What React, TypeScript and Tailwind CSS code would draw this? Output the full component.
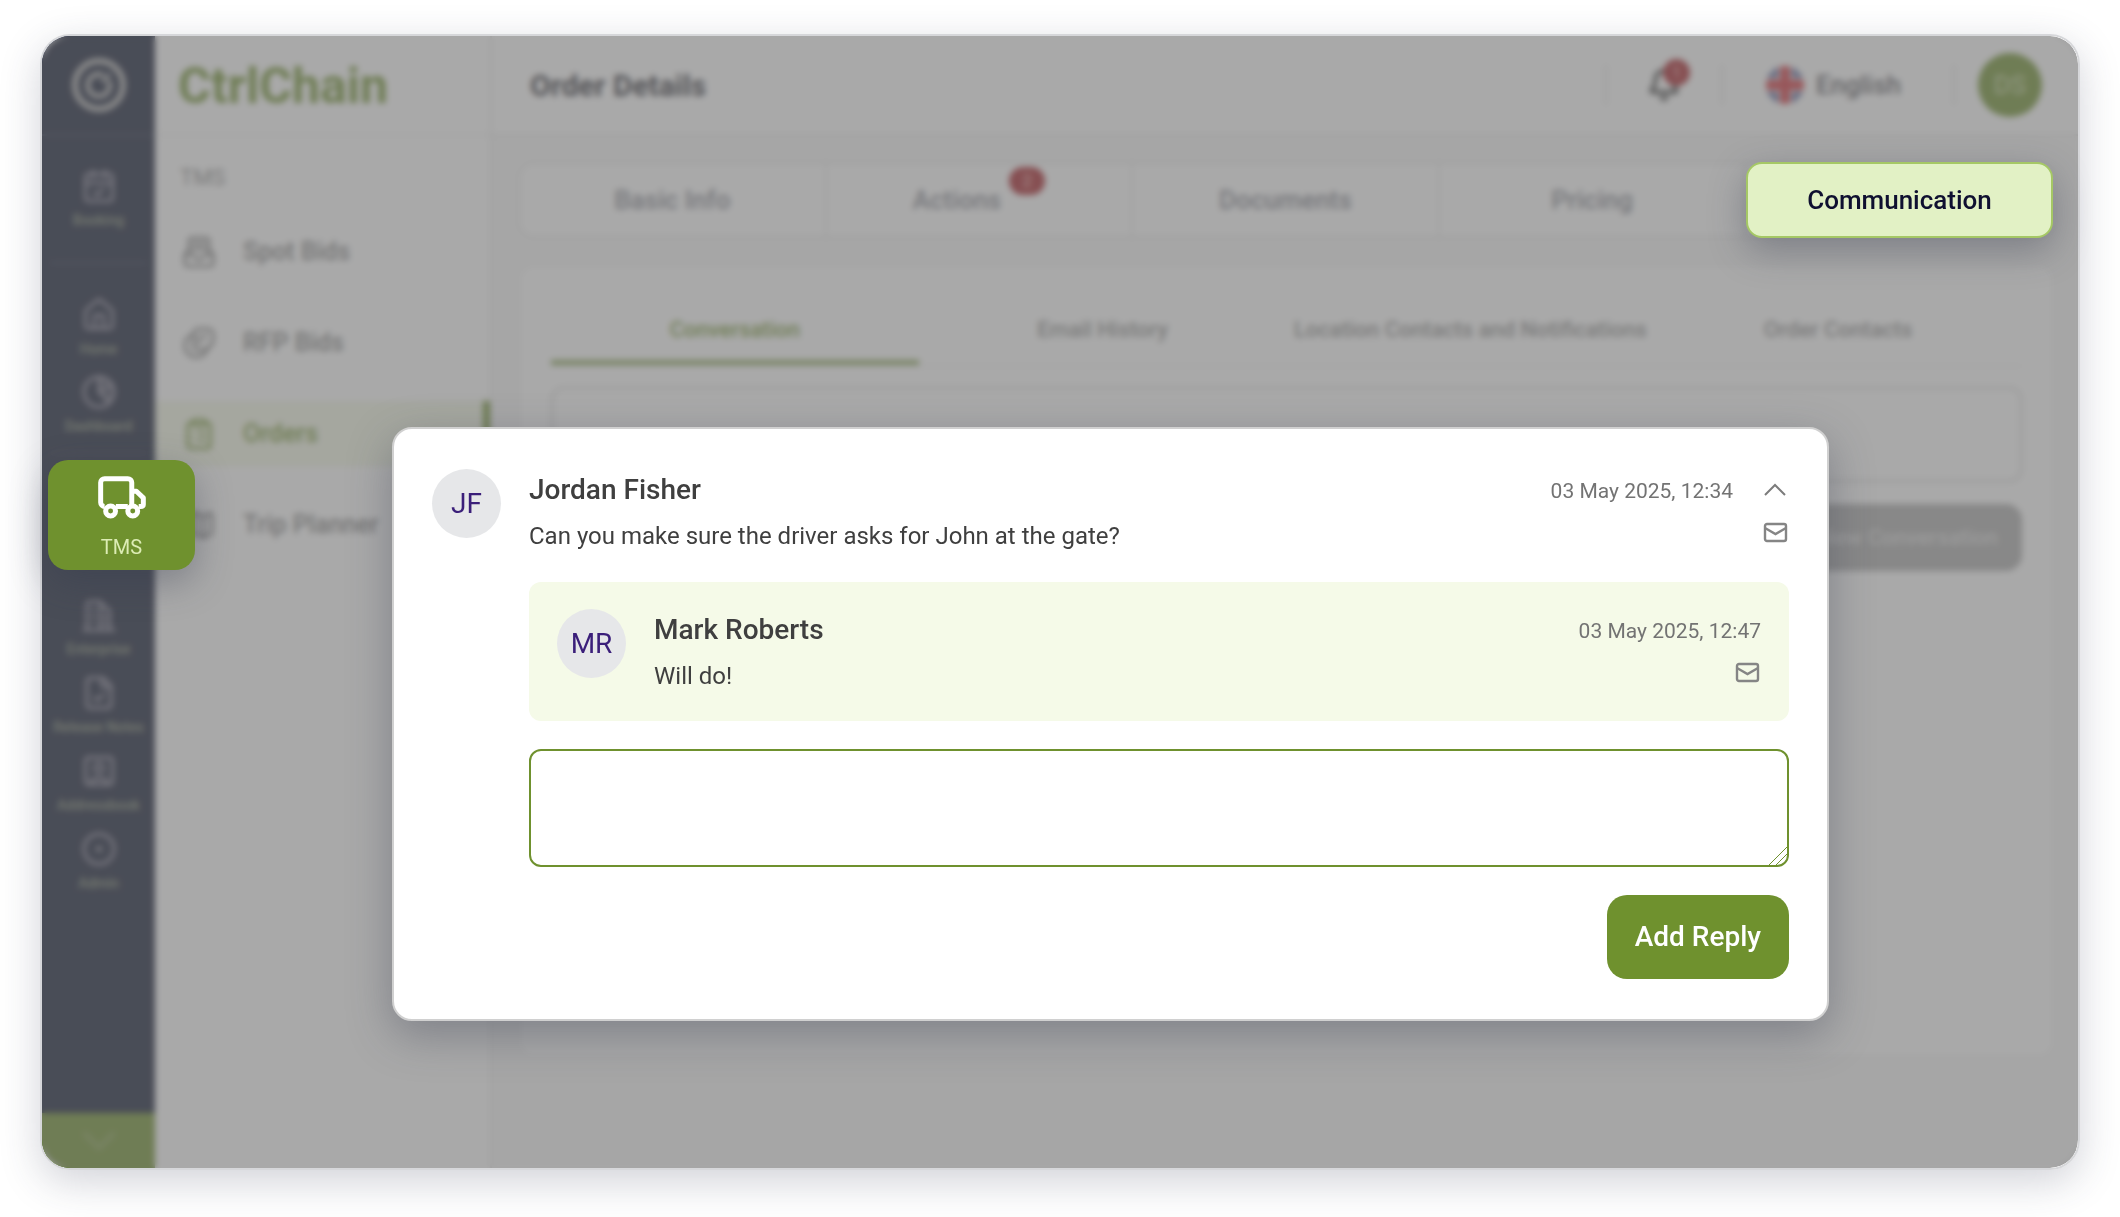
import type { ComponentType, ReactNode, SVGProps } from 'react';
import {
  Bell,
  CalendarCheck,
  ChevronDown,
  ClipboardList,
  CircleDot,
  FileCheck,
  House,
  Map,
  SquareUser,
} from 'lucide-react';
import clsx from 'clsx';

type IconType = ComponentType<SVGProps<SVGSVGElement>>;

function StrokeIcon({ children, ...props }: SVGProps<SVGSVGElement>) {
  return (
    <svg
      viewBox="0 0 24 24"
      fill="none"
      stroke="currentColor"
      strokeWidth="2"
      strokeLinecap="round"
      strokeLinejoin="round"
      {...props}
    >
      {children}
    </svg>
  );
}

function SpotIcon(props: SVGProps<SVGSVGElement>) {
  return (
    <StrokeIcon {...props}>
      <path d="M5 11V4a2 2 0 0 1 2-2h10a2 2 0 0 1 2 2v7M8 6h8M7 10h10M2 14l3-4M22 14l-3-4" />
      <path d="M2 14h6l2 3h4l2-3h6v6a2 2 0 0 1-2 2H4a2 2 0 0 1-2-2z" />
    </StrokeIcon>
  );
}

function RfpIcon(props: SVGProps<SVGSVGElement>) {
  return (
    <StrokeIcon {...props}>
      <path d="M12 2h6a4 4 0 0 1 4 4v3a8 8 0 0 1-8 8h-3a3 3 0 0 1-3-3V6a4 4 0 0 1 4-4z" />
      <path d="M8 6c-4 1-6 4-6 8a8 8 0 0 0 8 8c4 0 7-2 8-7M12 7v6M16 6v3" />
    </StrokeIcon>
  );
}

function PieIcon(props: SVGProps<SVGSVGElement>) {
  return (
    <StrokeIcon {...props}>
      <circle cx="12" cy="12" r="10" />
      <path d="M12 2v10l7 7M12 12l9-4" />
      <path d="M12 2a10 10 0 0 1 9 6l-9 4zM14 13l8-2-3 8z" fill="currentColor" fillOpacity="0.4" stroke="none" />
    </StrokeIcon>
  );
}

function BuildingIcon(props: SVGProps<SVGSVGElement>) {
  return (
    <StrokeIcon {...props}>
      <path d="M4 22V5a2 2 0 0 1 2-2h7v19M13 4l6 5v13M2 22h20M8 8h1M8 12h1M8 16h1M16 12v0M16 15v0M16 18v0" />
    </StrokeIcon>
  );
}

const RAIL_TOP = [
  { label: 'Home', icon: House },
  { label: 'Dashboard', icon: PieIcon },
];

const RAIL_BOTTOM = [
  { label: 'Enterprise', icon: BuildingIcon },
  { label: 'Release Notes', icon: FileCheck },
  { label: 'Addressbook', icon: SquareUser },
  { label: 'Admin', icon: CircleDot },
];

const MENU = [
  { label: 'Spot Bids', icon: SpotIcon },
  { label: 'RFP Bids', icon: RfpIcon },
  { label: 'Orders', icon: ClipboardList, active: true },
  { label: 'Trip Planner', icon: Map },
];

const ORDER_TABS = [
  { label: 'Basic Info' },
  { label: 'Actions', badge: 2 },
  { label: 'Documents' },
  { label: 'Pricing' },
];

const SUB_TABS = ['Conversation', 'Email History', 'Location Contacts and Notifications', 'Order Contacts'];

function RailItem({ label, icon: Icon }: { label: string; icon: IconType }) {
  return (
    <a href="#" className="flex flex-col items-center gap-[6px]">
      <Icon className="size-[36px] text-[#8c899c]" strokeWidth={2} />
      <span className="text-[14px] leading-5 font-medium whitespace-nowrap text-[#818c75]">{label}</span>
    </a>
  );
}

function Rail() {
  return (
    <nav className="flex w-[113px] shrink-0 flex-col bg-[#111932]">
      <div className="flex h-[100px] items-center justify-center border-b-2 border-[#2b334d]">
        <svg viewBox="0 0 56 56" className="size-[56px]" fill="none" stroke="#b4b4b4">
          <circle cx="28" cy="28" r="24" strokeWidth="6" />
          <path d="M32 18a11 11 0 1 0 6 6" strokeWidth="5" />
          <path d="M31 25l8-8" strokeWidth="4" />
        </svg>
      </div>
      <div className="mx-2 border-b-2 border-[#2b334d] py-[32px]">
        <RailItem label="Booking" icon={CalendarCheck} />
      </div>
      <div className="mx-2 flex flex-col gap-[15px] border-b-2 border-[#232b45] pt-[33px] pb-4">
        {RAIL_TOP.map((item) => (
          <RailItem key={item.label} {...item} />
        ))}
      </div>
      {/* The floating TMS tile covers this slot */}
      <div className="h-[143px] shrink-0" />
      <div className="flex flex-col gap-4">
        {RAIL_BOTTOM.map((item) => (
          <RailItem key={item.label} {...item} />
        ))}
      </div>
      <button type="button" aria-label="Collapse" className="mt-auto flex h-[55px] items-center justify-center bg-[#6f912e]">
        <ChevronDown className="size-14 text-[#86a252]" strokeWidth={2} />
      </button>
    </nav>
  );
}

function Menu() {
  return (
    <aside className="flex w-[337px] shrink-0 flex-col border-r-2 border-[#eaeaea] bg-white">
      <div className="flex h-[100px] items-center border-b-2 border-[#f1f1f1] pt-[2px] pl-[23px] text-[50px] font-bold text-[#6f912e]">
        CtrlChain
      </div>
      <h2 className="mt-[30px] pl-[25px] text-[22px] leading-6 text-[#8a8a8a]">TMS</h2>
      <ul className="mt-[29px] flex flex-col gap-[25px]">
        {MENU.map(({ label, icon: Icon, active }) => (
          <li key={label}>
            <a
              href="#"
              className={clsx(
                'flex h-[66px] items-center gap-[27px] pl-[27px] text-[25px] font-medium',
                active
                  ? 'border-r-[7px] border-[#6f912e] bg-[#f5f9e7] text-[#6f912e]'
                  : 'text-[#7d7d7d]',
              )}
            >
              <Icon className="size-[34px]" strokeWidth={2} />
              {label}
            </a>
          </li>
        ))}
      </ul>
    </aside>
  );
}

function UkFlag() {
  return (
    <svg viewBox="0 0 38 38" className="size-[38px] rounded-full">
      <rect width="38" height="38" fill="#f0f0f0" />
      <path d="M5 0h6v11zM0 5v6h11zM33 0h-6v11zM38 5v6H27zM5 38h6V27zM0 33v-6h11zM33 38h-6V27zM38 33v-6H27z" fill="#1f2b7b" stroke="#1f2b7b" />
      <path d="M14 0h10v14h14v10H24v14H14V24H0V14h14z" fill="#d3333c" />
    </svg>
  );
}

function Separator() {
  return <div className="h-10 w-[2px] bg-[#e2e2e2]" />;
}

function TopBar() {
  return (
    <header className="flex h-[100px] items-center border-b-2 border-[#eaeaea] bg-white pr-9 pl-[38px]">
      <h1 className="text-[30px] font-bold text-[#2e2e36]">Order Details</h1>
      <div className="ml-auto flex items-center">
        <Separator />
        <button type="button" aria-label="Notifications" className="relative mx-[39px] p-px">
          <Bell className="size-[34px] text-[#444444]" strokeWidth={3} />
          <span className="absolute -top-2 -right-2 flex size-[27px] items-center justify-center rounded-full bg-[#a81f27] text-[16px] font-bold text-[#d88]">
            1
          </span>
        </button>
        <Separator />
        <button type="button" className="mr-[52px] ml-[43px] flex items-center gap-3 text-[26px] font-medium text-[#55555b]">
          <UkFlag />
          English
        </button>
        <Separator />
        <div className="ml-[23px] flex size-16 items-center justify-center rounded-full bg-[#6f912e] text-[26px] font-medium text-[#b9cd8e]">
          DS
        </div>
      </div>
    </header>
  );
}

function OrderPage() {
  return (
    <div className="flex min-w-0 flex-1 flex-col bg-[#f8f8f8]">
      <TopBar />
      <main className="pt-[26px] pr-[23px] pl-[26px]">
        <div className="grid h-[76px] grid-cols-5 rounded-2xl border-2 border-[#e8e8e8] bg-white">
          {ORDER_TABS.map(({ label, badge }) => (
            <button
              key={label}
              type="button"
              className="flex items-center justify-center border-r-2 border-[#e8e8e8] text-[26px] font-medium text-[#7f828c]"
            >
              <span className={clsx('relative', badge && 'pr-11')}>
                {label}
                {badge && (
                  <span className="absolute -top-[14px] right-0 flex h-7 w-9 items-center justify-center rounded-full bg-[#a81f27] text-[18px] font-bold text-[#d88]">
                    {badge}
                  </span>
                )}
              </span>
            </button>
          ))}
        </div>

        <section className="mt-[26px] h-[794px] rounded-2xl border-2 border-[#f0f0f0] bg-white px-[31px] pt-[33px]">
          <div className="grid grid-cols-4 border-b-2 border-[#f3f3f3]">
            {SUB_TABS.map((label, i) => (
              <button
                key={label}
                type="button"
                className={clsx(
                  'h-[66px] border-b-[5px] text-[22px] font-medium whitespace-nowrap',
                  i === 0 ? 'border-[#84a050] text-[#6f912e]' : 'border-transparent text-[#8a8a8a]',
                )}
              >
                {label}
              </button>
            ))}
          </div>
          <textarea
            aria-label="New conversation"
            className="mt-5 block h-[95px] w-full resize-none rounded-xl border-2 border-[#d4d4d4] bg-white"
          />
          <button
            type="button"
            className="mt-[22px] ml-auto block h-[67px] rounded-2xl bg-[#acacac] px-6 text-[22px] font-medium text-[#dddddd]"
          >
            New Conversation
          </button>
        </section>
      </main>
    </div>
  );
}

function TruckIcon() {
  return (
    <svg viewBox="0 0 145 130" className="h-[43px] w-12" fill="none" stroke="#fff" strokeWidth="15" strokeLinejoin="round">
      <path d="M20 92a12 12 0 0 1-12-12V20A12 12 0 0 1 20 8h70a12 12 0 0 1 12 12v72M54 92h36M102 46h14l21 20v20q0 6-8 6h-6" />
      <circle cx="38" cy="106" r="15" />
      <circle cx="105" cy="106" r="15" />
    </svg>
  );
}

function MailIcon() {
  return (
    <svg viewBox="0 0 28 28" className="size-7" fill="none" stroke="#858585" strokeWidth="2.400">
      <rect x="4" y="5" width="21" height="17" rx="2" />
      <path d="M4 9l10.500 6L25 9" />
    </svg>
  );
}

function ChevronUpIcon() {
  return (
    <svg viewBox="0 0 28 28" className="size-7" fill="none" stroke="#7c7c7c" strokeWidth="2">
      <path d="M4 19l10-10 10 10" />
    </svg>
  );
}

function Avatar({ initials }: { initials: string }) {
  return (
    <div className="flex size-[69px] shrink-0 items-center justify-center rounded-full bg-[#e6e7e9] text-[28px] text-[#3b1f7a]">
      {initials}
    </div>
  );
}

interface MessageProps {
  author: string;
  initials: string;
  date: string;
  text: string;
  toggle?: ReactNode;
}

function Message({ author, initials, date, text, toggle }: MessageProps) {
  return (
    <article className="flex gap-7">
      <Avatar initials={initials} />
      <div className="min-w-0 flex-1 pt-px">
        <div className="flex h-10 items-center">
          <h3 className="flex-1 text-[28px] font-medium text-[#3f3f3f]">{author}</h3>
          <time className="pt-1 text-[21px] text-[#737373]">{date}</time>
          {toggle}
        </div>
        <div className="mt-[6px] flex h-10 items-center">
          <p className="flex-1 text-[24px] text-[#3f3f3f]">{text}</p>
          <div className="mb-[6px]">
            <MailIcon />
          </div>
        </div>
      </div>
    </article>
  );
}

function ReplyDialog() {
  return (
    <div
      role="dialog"
      aria-label="Conversation"
      className="absolute top-[391px] right-[249px] left-[350px] rounded-[20px] border-2 border-[#d0d0d0] bg-white px-[38px] py-10 shadow-[0_14px_44px_rgba(50,54,74,0.35)]"
    >
      <Message
        author="Jordan Fisher"
        initials="JF"
        date="03 May 2025, 12:34"
        text="Can you make sure the driver asks for John at the gate?"
        toggle={
          <button type="button" aria-label="Collapse thread" className="ml-7">
            <ChevronUpIcon />
          </button>
        }
      />
      <div className="mt-[26px] ml-[97px]">
        <div className="h-[139px] rounded-xl bg-[#f5fae8] px-7 pt-[27px]">
          <Message author="Mark Roberts" initials="MR" date="03 May 2025, 12:47" text="Will do!" />
        </div>
        <div className="relative mt-7">
          <textarea
            aria-label="Reply"
            className="block h-[118px] w-full resize-none rounded-xl border-2 border-[#6f912e] bg-white p-4 text-[24px] outline-none"
          />
          <svg viewBox="0 0 22 22" className="pointer-events-none absolute right-0 bottom-0 size-[22px]" stroke="#6f912e" fill="none">
            <path d="M1 21L21 1M8 21L21 8" />
          </svg>
        </div>
        <button
          type="button"
          className="mt-7 ml-auto block h-[84px] rounded-[20px] bg-[#6f912e] px-7 text-[28px] font-medium text-white"
        >
          Add Reply
        </button>
      </div>
    </div>
  );
}

export default function App() {
  return (
    <div className="flex min-h-screen bg-white px-10 pt-[34px] pb-[47px] font-['Roboto',sans-serif]">
      <div className="relative flex flex-1 rounded-[30px] border-2 border-[#d6d7da] shadow-[0_12px_40px_rgba(50,54,80,0.22)]">
        <div className="relative flex flex-1 overflow-hidden rounded-[28px]">
          <Rail />
          <Menu />
          <OrderPage />
          <div className="absolute inset-0 bg-[#707070]/60 backdrop-blur-[3px]" />
        </div>

        <button
          type="button"
          className="absolute top-[126px] right-[25px] h-[76px] w-[307px] rounded-[16px] border-2 border-[#a5c865] bg-[#e2f1c5] text-[26px] font-medium text-[#0f1030] shadow-[0_12px_36px_rgba(50,54,74,0.35)]"
        >
          Communication
        </button>
        <a
          href="#"
          className="absolute top-[424px] left-[6px] flex h-[110px] w-[147px] flex-col items-center gap-[14px] rounded-[20px] bg-[#6f912e] pt-4 shadow-[0_12px_36px_rgba(50,54,74,0.35)]"
        >
          <TruckIcon />
          <span className="text-[20px] leading-7 text-[#dcecb4]">TMS</span>
        </a>
        <ReplyDialog />
      </div>
    </div>
  );
}
